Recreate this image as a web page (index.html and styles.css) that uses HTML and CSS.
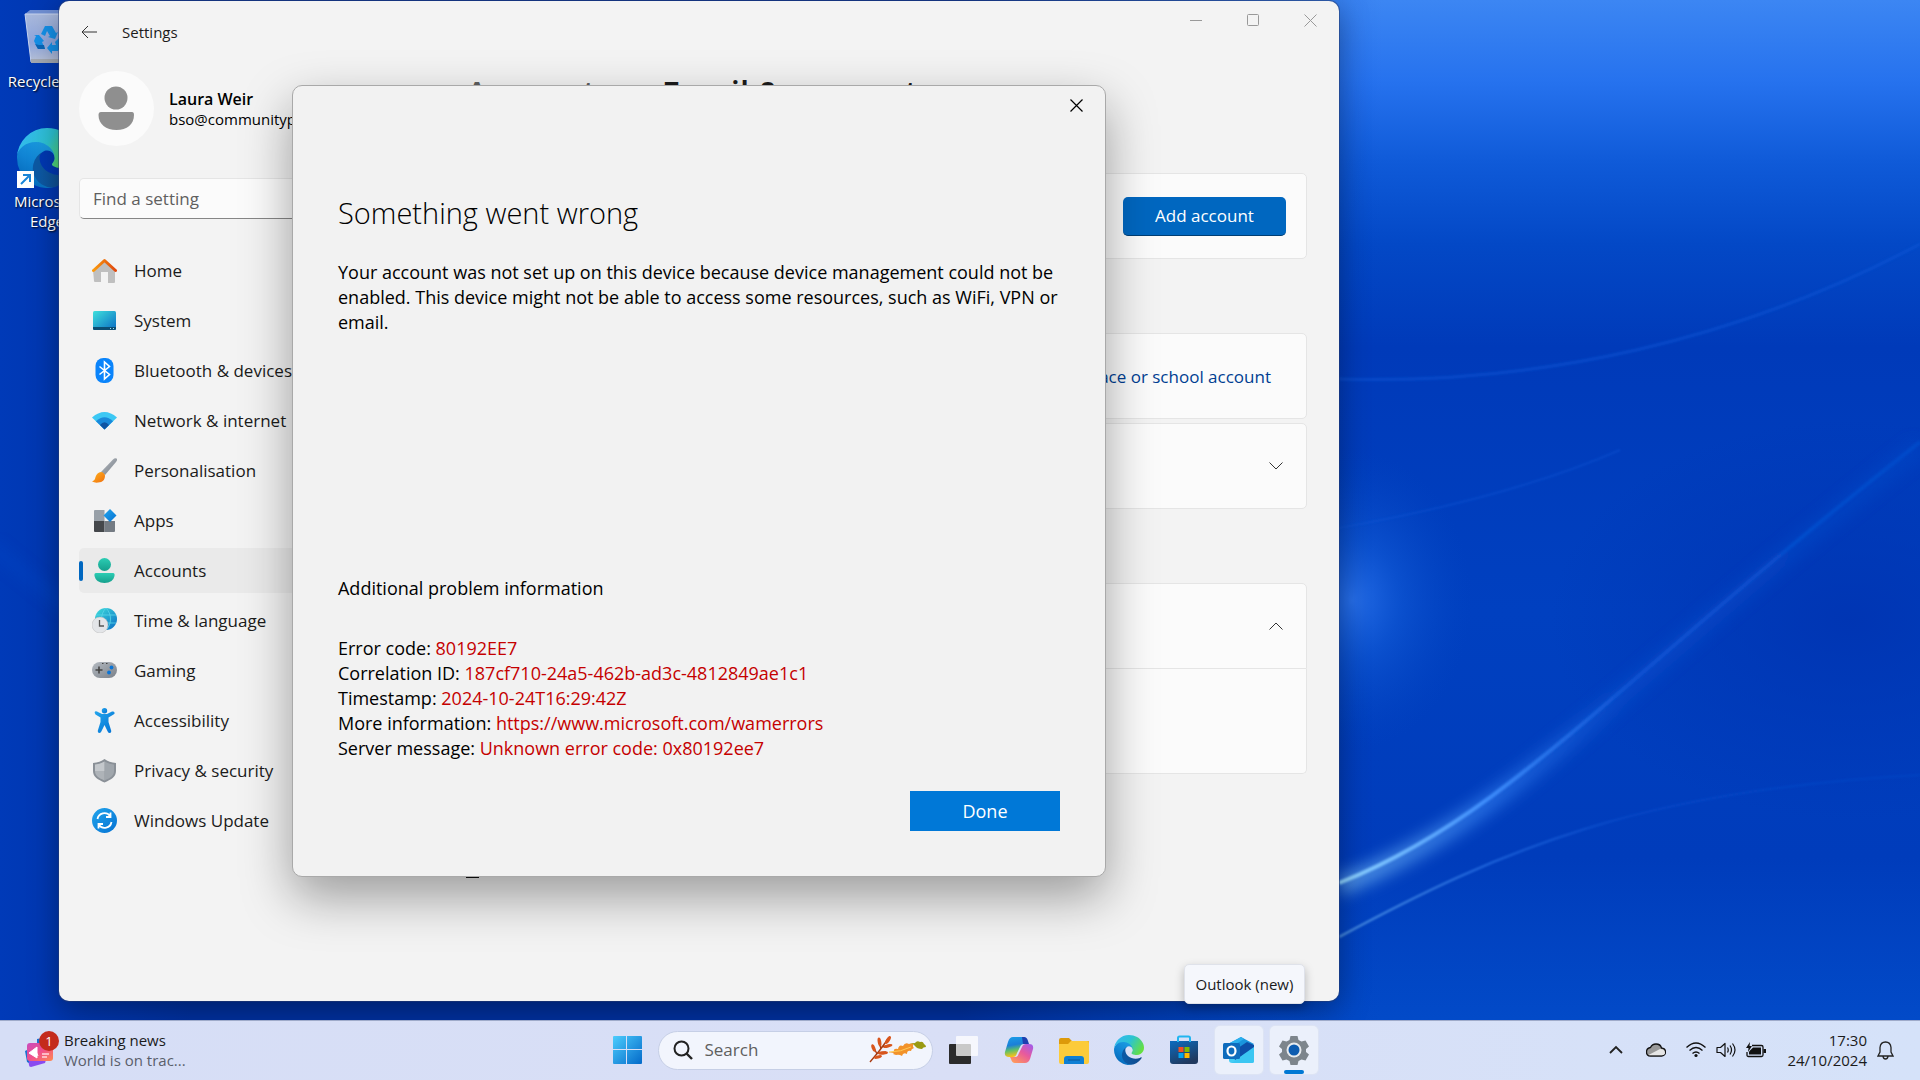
FILE: index.html
```html
<!DOCTYPE html>
<html lang="en-GB">
<head>
  <meta charset="UTF-8" />
  <title>Settings</title>
  <link rel="stylesheet" href="styles.css">
</head>
<body>
  <!-- shared gradients and the Edge logo -->
  <svg class="defs" width="0" height="0" aria-hidden="true">
    <defs>
      <linearGradient id="edgeDark" x1="0.2" y1="0.5" x2="1" y2="0.5"><stop offset="0" stop-color="#0c59a4"/><stop offset="1" stop-color="#114a8b"/></linearGradient>
      <linearGradient id="edgeBlue" x1="0.8" y1="0.1" x2="0.3" y2="1"><stop offset="0" stop-color="#1b9de2"/><stop offset="0.5" stop-color="#1184d4"/><stop offset="1" stop-color="#0367b8"/></linearGradient>
      <linearGradient id="edgeGreen" x1="0" y1="0.2" x2="1" y2="0.6"><stop offset="0" stop-color="#35b8f1"/><stop offset="0.5" stop-color="#2cc3d2"/><stop offset="1" stop-color="#66e03f"/></linearGradient>
      <linearGradient id="sky" x1="0" y1="0" x2="1" y2="1"><stop offset="0" stop-color="#3fe0dc"/><stop offset="1" stop-color="#0a6cc4"/></linearGradient>
      <linearGradient id="grey" x1="0" y1="0" x2="1" y2="1"><stop offset="0" stop-color="#b4bac1"/><stop offset="1" stop-color="#7a8088"/></linearGradient>
      <linearGradient id="teal" x1="0" y1="0" x2="0" y2="1"><stop offset="0" stop-color="#2ccdb4"/><stop offset="1" stop-color="#159f8c"/></linearGradient>
      <linearGradient id="blue" x1="0" y1="0" x2="1" y2="1"><stop offset="0" stop-color="#22a5ec"/><stop offset="1" stop-color="#0572d3"/></linearGradient>
      <linearGradient id="orange" x1="0" y1="0" x2="1" y2="0"><stop offset="0" stop-color="#fb9a0c"/><stop offset="1" stop-color="#e0480d"/></linearGradient>
      <linearGradient id="flame" x1="0" y1="0" x2="1" y2="1"><stop offset="0" stop-color="#ffb21c"/><stop offset="1" stop-color="#f07010"/></linearGradient>
    </defs>
    <symbol id="edge" viewBox="0 0 256 256">
      <g transform="translate(-4.63 -4.92)">
        <path fill="url(#edgeDark)" d="M235.68 195.46a93.73 93.73 0 0 1-10.54 4.71 101.87 101.87 0 0 1-35.9 6.46c-47.32 0-88.54-32.55-88.54-74.32A31.48 31.48 0 0 1 117.13 105c-42.8 1.8-53.8 46.4-53.8 72.53 0 73.88 68.09 81.37 82.76 81.37 7.91 0 19.84-2.3 27-4.56l1.31-.44a128.34 128.34 0 0 0 66.6-52.8 4 4 0 0 0-5.32-5.64z"/>
        <path fill="url(#edgeBlue)" d="M110.34 246.34A79.2 79.2 0 0 1 87.6 225a80.72 80.72 0 0 1 29.53-120c3.12-1.47 8.45-4.13 15.54-4a32.35 32.35 0 0 1 25.69 13 31.88 31.88 0 0 1 6.36 18.66c0-.21 24.46-79.6-80-79.6-43.9 0-80 41.66-80 78.21a130.15 130.15 0 0 0 12.11 56 128 128 0 0 0 156.38 67.11 75.55 75.55 0 0 1-62.78-8z"/>
        <path fill="url(#edgeGreen)" d="M156.94 153.78c-.81 1.05-3.3 2.5-3.3 5.66 0 2.61 1.7 5.12 4.72 7.23 14.38 10 41.49 8.68 41.56 8.68a59.56 59.56 0 0 0 30.27-8.35 61.38 61.38 0 0 0 30.43-52.88c.26-22.41-8-37.31-11.34-43.91-21.19-41.44-66.93-65.29-116.67-65.29a128 128 0 0 0-128 126.2c.48-36.54 36.8-66.05 80-66.05 3.5 0 23.46.34 42 10.07 16.34 8.58 24.9 18.94 30.85 29.21 6.18 10.67 7.28 24.15 7.28 29.52s-2.74 13.33-7.8 19.91z"/>
      </g>
    </symbol>
  </svg>

  <main class="desktop">
    <svg class="wallpaper" viewBox="0 0 1920 1020" preserveAspectRatio="none" aria-hidden="true">
      <defs>
        <linearGradient id="wpBase" x1="0" y1="0" x2="0" y2="1">
          <stop offset="0" stop-color="#3c86f3"/><stop offset="0.08" stop-color="#2672ee"/><stop offset="0.16" stop-color="#0f5ad8"/>
          <stop offset="0.24" stop-color="#0348c6"/><stop offset="0.34" stop-color="#003ab9"/><stop offset="0.6" stop-color="#0040c0"/>
          <stop offset="0.84" stop-color="#003cbb"/><stop offset="1" stop-color="#024ac8"/>
        </linearGradient>
        <linearGradient id="wpLeft" x1="0" y1="0" x2="1" y2="0">
          <stop offset="0" stop-color="#003ab8"/><stop offset="0.1" stop-color="#00309e"/><stop offset="0.5" stop-color="#00309e"/><stop offset="0.72" stop-color="#003ab9" stop-opacity="0"/>
        </linearGradient>
        <radialGradient id="wpGlow"><stop offset="0" stop-color="#2a72ec" stop-opacity="0.9"/><stop offset="0.4" stop-color="#1560dc" stop-opacity="0.5"/><stop offset="1" stop-color="#0448c4" stop-opacity="0"/></radialGradient>
        <radialGradient id="wpDark"><stop offset="0" stop-color="#0034b2" stop-opacity="0.9"/><stop offset="1" stop-color="#0034b2" stop-opacity="0"/></radialGradient>
        <linearGradient id="wpStreak" gradientUnits="userSpaceOnUse" x1="1339" y1="0" x2="1920" y2="0">
          <stop offset="0" stop-color="#8fd4ff"/><stop offset="0.25" stop-color="#3f8dfb"/><stop offset="0.5" stop-color="#1560e0" stop-opacity="0.5"/><stop offset="1" stop-color="#0a58d8" stop-opacity="0.4"/>
        </linearGradient>
        <filter id="soft" x="-20%" y="-20%" width="140%" height="140%"><feGaussianBlur stdDeviation="8"/></filter>
        <filter id="fine" x="-20%" y="-20%" width="140%" height="140%"><feGaussianBlur stdDeviation="1"/></filter>
      </defs>
      <rect width="1920" height="1020" fill="url(#wpBase)"/>
      <rect width="1920" height="1020" fill="url(#wpLeft)"/>
      <ellipse cx="1850" cy="620" rx="300" ry="200" fill="url(#wpDark)"/>
      <ellipse cx="1352" cy="600" rx="120" ry="150" fill="url(#wpGlow)"/>
      <g fill="none">
        <path d="M1339 886C1510 820 1610 690 1920 446" stroke="url(#wpStreak)" stroke-width="18" opacity="0.6" filter="url(#soft)"/>
        <path d="M1339 883C1510 815 1610 685 1920 442" stroke="url(#wpStreak)" stroke-width="4" filter="url(#fine)"/>
        <path d="M1339 937C1500 850 1640 790 1920 775" stroke="url(#wpStreak)" stroke-width="2" opacity="0.6" filter="url(#fine)"/>
        <path d="M1339 379C1540 385 1740 340 1920 244" stroke="#1058d8" stroke-width="3" opacity="0.5" filter="url(#fine)"/>
        <path d="M1339 528C1440 510 1540 485 1620 450" stroke="#1058d8" stroke-width="2" opacity="0.4" filter="url(#fine)"/>
        <path d="M-10 545L70 610" stroke="#0a50d0" stroke-width="6" opacity="0.5" filter="url(#soft)"/>
      </g>
    </svg>

    <div class="shortcuts">
      <a class="shortcut" href="#recycle">
        <svg width="60" height="60" viewBox="0 0 60 60">
          <defs><linearGradient id="bin" x1="0" y1="0" x2="0" y2="1"><stop offset="0" stop-color="#a9b9dc"/><stop offset="0.6" stop-color="#8fa6dd"/><stop offset="1" stop-color="#b9c3d8"/></linearGradient></defs>
          <path d="M8 6l5-4h34l5 4z" fill="#6f8ed2"/>
          <path d="M8 6h44l-5 48H14z" fill="url(#bin)" stroke="#c7d3ee"/>
          <path d="M14 51h33v4H14z" fill="#a4a9b2"/>
          <g fill="#1490e8"><path d="M24 26l4-8h7l4 7 2-1-3 7-7-2 2-1-3-5-2 5z"/><path d="M22 27l5 6-2 1 3 7h-7l-4-8 2-5-2-1z"/><path d="M42 30l3 7-4 6h-6v3l-5-6 5-6v3h4l-1-3z"/></g>
          <path d="M18 36l3 5h7l-1-4h-5z" fill="#0a66b8"/>
        </svg>
        <span>Recycle Bin</span>
      </a>
      <a class="shortcut" href="#edge-browser">
        <svg width="60" height="60" viewBox="0 0 60 60">
          <use href="#edge" width="60" height="60"/>
          <path d="M0 43h17v17H0z" fill="#fff"/>
          <path d="M4 56l9-9M6 47h7v7" fill="none" stroke="#1a86d8" stroke-width="2"/>
        </svg>
        <span>Microsoft Edge</span>
      </a>
    </div>

    <section class="window" aria-label="Settings">
      <header class="titlebar">
        <button class="back" aria-label="Back"><svg width="18" height="16" viewBox="0 0 18 16"><path d="M9 2L3 8l6 6M3 8h15" fill="none" stroke="#333"/></svg></button>
        <span class="app-name">Settings</span>
        <div class="caption">
          <button aria-label="Minimise"><svg width="13" height="13" viewBox="0 0 13 13"><path d="M0 6.500h12" stroke="#999"/></svg></button>
          <button aria-label="Maximise"><svg width="13" height="13" viewBox="0 0 13 13"><rect x="0.500" y="0.500" width="11" height="11" rx="1" fill="none" stroke="#999"/></svg></button>
          <button aria-label="Close"><svg width="13" height="13" viewBox="0 0 13 13"><path d="M0.500 0.500l12 12M12.500 0.500l-12 12" stroke="#999"/></svg></button>
        </div>
      </header>

      <div class="body">
        <aside class="sidebar">
          <div class="profile">
            <svg class="avatar" width="75" height="75" viewBox="0 0 75 75"><circle cx="37" cy="27" r="11.500" fill="#8f8f8f"/><path d="M22 41h31q2 0 2 3c0 9-7 15-17.500 15S19.500 53 19.500 44q0-3 2.500-3z" fill="#8f8f8f"/></svg>
            <div>
              <div class="user-name">Laura Weir</div>
              <div class="user-mail">bso@communityp</div>
            </div>
          </div>
          <input class="find" type="text" placeholder="Find a setting" aria-label="Find a setting">
          <nav class="nav">
            <a href="#home"><svg viewBox="0 0 25 25"><path d="M1 12L12.500 2 24 12v0h-1v12q0 1-1 1h-6V14H9v10H3q-1 0-1-1z" fill="#bfbfbf"/><path d="M1.500 12.500L12.500 2.500l11 10" fill="none" stroke="url(#orange)" stroke-width="3" stroke-linecap="round" stroke-linejoin="round"/></svg>Home</a>
            <a href="#system"><svg viewBox="0 0 25 25"><rect x="1" y="3" width="23" height="19" rx="1.500" fill="url(#sky)"/><path d="M1 19h23v1.500q0 1.500-1.500 1.500h-20Q1 22 1 20.500z" fill="#0b4e74"/><path d="M18 20.500h1M21 20.500h1" stroke="#9fe0f0"/></svg>System</a>
            <a href="#bluetooth"><svg viewBox="0 0 25 25"><rect x="3.500" width="18" height="25" rx="8" fill="#0a84fb"/><path d="M7.500 8.500l10 8-5 4.500V4l5 4.500-10 8" fill="none" stroke="#fff" stroke-width="1.600"/></svg>Bluetooth &amp; devices</a>
            <a href="#network"><svg viewBox="0 0 25 25"><path d="M0 9.500Q12.500-1.500 25 9.500L12.500 21.500z" fill="#3cc8f4"/><path d="M4 13.300Q12.500 5 21 13.300l-8.500 8.200z" fill="#1989da"/><path d="M8 17Q12.500 11.500 17 17l-4.500 4.500z" fill="#0f55a3"/></svg>Network &amp; internet</a>
            <a href="#personal"><svg viewBox="0 0 25 25"><path d="M9 14L21 1.500Q23-.5 24.500.5T24 4L13 17z" fill="url(#grey)"/><path d="M9 14q3 0 4 3.500c0 4-2 7-7 7q-3 .5-6-1 3-1 3.500-4.500Q5 14.500 9 14z" fill="url(#flame)"/></svg>Personalisation</a>
            <a href="#apps"><svg viewBox="0 0 25 25"><path d="M3 2h9.500v11H2V3q0-1 1-1z" fill="#98a0a8"/><path d="M2 13h10.500v11H3q-1 0-1-1z" fill="#44474b"/><path d="M12.500 13H23v10q0 1-1 1h-9.500z" fill="#747b83"/><path d="M18 1l6.500 6.500L18 14l-6.500-6.500z" fill="url(#blue)"/></svg>Apps</a>
            <a class="active" href="#accounts"><svg viewBox="0 0 25 25"><circle cx="12.500" cy="6.500" r="6.500" fill="url(#teal)"/><path d="M4 15h17q2 0 1.500 3-1.500 7-10 7t-10-7Q2 15 4 15z" fill="url(#teal)"/></svg>Accounts</a>
            <a href="#time"><svg viewBox="0 0 25 25"><circle cx="14" cy="11" r="11" fill="url(#sky)"/><path d="M14 0c-6 6-6 16 0 22M14 0c6 6 6 16 0 22M4 7h20M4 15h20" fill="none" stroke="#5cd5ea" stroke-width="0.800"/><circle cx="8" cy="17" r="8" fill="#e3e5e8" stroke="#bbb" stroke-width="0.500"/><path d="M7.500 12v6H12" fill="none" stroke="#555" stroke-width="1.300"/></svg>Time &amp; language</a>
            <a href="#gaming"><svg viewBox="0 0 25 25"><rect y="4" width="25" height="16" rx="8" fill="url(#grey)"/><path d="M3.500 12h7M7 8.500v7" stroke="#444" stroke-width="1.600"/><circle cx="19.500" cy="9.500" r="1.900" fill="#0a74d6"/><circle cx="17" cy="14.500" r="1.900" fill="#0a74d6"/><path d="M10 5.500h1.500M14 5.500h1.500" stroke="#444"/></svg>Gaming</a>
            <a href="#accessibility"><svg viewBox="0 0 25 25"><circle cx="12.500" cy="2.700" r="2.700" fill="url(#blue)"/><path d="M3 3.500q1-.5 2 0l5 2.500h5l5-2.500q2-.5 2.500 1t-1 2L16.500 9.500V14l2.800 9q0 2-1.500 2t-2-1.200L12.500 17l-3.300 6.800Q8.500 25 7.200 25t-1.500-2l2.800-9V9.500L3.500 6.500Q2 4.500 3 3.500z" fill="url(#blue)"/></svg>Accessibility</a>
            <a href="#privacy"><svg viewBox="0 0 25 25"><path d="M12.500 1Q17 4.500 24 5v8c0 6-5 8.500-11.500 11.500C6 21.500 1 19 1 13V5q7-.5 11.500-4z" fill="#8a9097"/><path d="M12.500 3.500Q17 6 22 6.500V13c0 5-4 7-9.500 9.500z" fill="#a0a6ac"/><path d="M12.500 3.500Q8 6 3 6.500V13h9.500z" fill="#c4c8cc"/><path d="M3 13c0 5 4 7 9.500 9.500V13z" fill="#aeb3b8"/></svg>Privacy &amp; security</a>
            <a href="#update"><svg viewBox="0 0 25 25"><circle cx="12.500" cy="12.500" r="12.500" fill="url(#blue)"/><path d="M5.500 11a7 7 0 0 1 12.500-3M19.500 14A7 7 0 0 1 7 17M18.500 4.500V9H14M6.500 20.500V16H11" fill="none" stroke="#fff" stroke-width="1.800"/></svg>Windows Update</a>
          </nav>
        </aside>

        <div class="content">
          <h1><span class="crumb">Accounts</span><span class="crumb sep">›</span>Email &amp; accounts</h1>
          <div class="card"><button class="add">Add account</button></div>
          <div class="card section"><a href="#work">Add a workplace or school account</a></div>
          <div class="card">
            <button class="chevron" aria-label="Expand"><svg width="14" height="8" viewBox="0 0 14 8"><path d="M0.500 0.500L7 7l6.500-6.500" fill="none" stroke="#333"/></svg></button>
          </div>
          <div class="card section last">
            <button class="chevron" aria-label="Collapse"><svg width="14" height="8" viewBox="0 0 14 8"><path d="M0.500 7.500L7 1l6.500 6.500" fill="none" stroke="#333"/></svg></button>
          </div>
          <div class="card-extra"></div>
          <svg class="help" width="13" height="16" viewBox="0 0 13 16" aria-hidden="true"><path d="M1 1h11v14H1z" fill="none" stroke="#111" stroke-width="2"/></svg>
        </div>
      </div>

      <div class="overlay">
        <div class="dialog" role="dialog" aria-labelledby="dialogTitle">
          <button class="dialog-close" aria-label="Close"><svg width="13" height="13" viewBox="0 0 13 13"><path d="M0.500 0.500l12 12M12.500 0.500l-12 12" stroke="#000" stroke-width="1.200"/></svg></button>
          <h2 id="dialogTitle">Something went wrong</h2>
          <p class="message">Your account was not set up on this device because device management could not be enabled. This device might not be able to access some resources, such as WiFi, VPN or email.</p>
          <p>Additional problem information</p>
          <ul class="details">
            <li>Error code: <span>80192EE7</span></li>
            <li>Correlation ID: <span>187cf710-24a5-462b-ad3c-4812849ae1c1</span></li>
            <li>Timestamp: <span>2024-10-24T16:29:42Z</span></li>
            <li>More information: <span>https://www.microsoft.com/wamerrors</span></li>
            <li>Server message: <span>Unknown error code: 0x80192ee7</span></li>
          </ul>
          <button class="done">Done</button>
        </div>
      </div>
    </section>
  </main>

  <footer class="taskbar">
    <button class="news">
      <svg width="34" height="38" viewBox="0 0 34 38">
        <defs><linearGradient id="newsCard" x1="0" y1="0" x2="1" y2="1"><stop offset="0" stop-color="#c94bbd"/><stop offset="0.5" stop-color="#f0508c"/><stop offset="1" stop-color="#ff8a50"/></linearGradient></defs>
        <path d="M3 28l18 1-1 3-14 4q-2 0-2-2z" fill="#8a4bf0"/>
        <path d="M0 20l4-2v14l-2-1zM12 8l10-2v8H12z" fill="#1a6fd0"/>
        <rect x="2" y="12" width="26" height="18" rx="3" fill="url(#newsCard)"/>
        <path d="M4 22l8-6v11zM10 18l3 7" fill="#fff" stroke="#fff"/>
        <path d="M17 23h7M17 26h5" stroke="#ffd9e0" stroke-width="1.500"/>
        <circle cx="24" cy="10" r="10" fill="#c42b1c"/>
        <text class="badge" x="24" y="15" text-anchor="middle">1</text>
      </svg>
      <span class="news-text">Breaking news<small>World is on trac...</small></span>
    </button>

    <div class="apps">
      <button class="app" aria-label="Start"><svg width="30" height="30" viewBox="0 0 30 30"><defs><linearGradient id="start" gradientUnits="userSpaceOnUse" x1="0" y1="0" x2="30" y2="30"><stop offset="0" stop-color="#4fd0ff"/><stop offset="1" stop-color="#0268c8"/></linearGradient></defs><path d="M2 1h12v13H1V2q0-1 1-1zM15 1h14q1 0 1 1v12H15zM1 15h13v14H2q-1 0-1-1zM15 15h15v13q0 1-1 1H15z" fill="url(#start)"/></svg></button>
      <label class="search">
        <svg width="20" height="20" viewBox="0 0 20 20"><circle cx="8.500" cy="8.500" r="7" fill="none" stroke="#222" stroke-width="2"/><path d="M13.500 13.500L19 19" stroke="#222" stroke-width="2.400"/></svg>
        <input type="text" placeholder="Search" aria-label="Search">
        <svg width="58" height="28" viewBox="0 0 58 28">
          <path d="M1 26Q10 16 19 3M8 18L4 10M12 13L10 4M9 17l8-1M13 11l8-2" fill="none" stroke="#a83a10" stroke-width="1.400"/>
          <g fill="#d8551c"><ellipse cx="4.500" cy="12" rx="1.800" ry="4" transform="rotate(-20 4.500 12)"/><ellipse cx="10.500" cy="6" rx="1.800" ry="4.500" transform="rotate(-10 10.500 6)"/><ellipse cx="19" cy="4" rx="1.900" ry="4.500" transform="rotate(32 19 4)"/><ellipse cx="19" cy="10" rx="1.600" ry="4.500" transform="rotate(75 19 10)"/><ellipse cx="14" cy="17" rx="1.700" ry="5" transform="rotate(85 14 17)"/><ellipse cx="9" cy="21" rx="1.500" ry="4" transform="rotate(75 9 21)"/></g>
          <path d="M19 16h6q-1-4 4-3 1-5 5-3 2-4 6-2l5-1q-2 4 0 5-3 1-3 3-4-1-4 3-4-2-5 2-3-2-6-1l-3-1 1-1z" fill="#f2922a"/>
          <path d="M20 16q12 0 22-5" fill="none" stroke="#ffcb55"/>
          <path d="M40 8l6-1q2-3 5-1 3-1 4 2 2 1 2 3-3 0-4 2-5 0-7-3l-2-2z" fill="#9a9a12"/>
        </svg>
      </label>
      <button class="app" aria-label="Task view"><svg width="30" height="30" viewBox="0 0 30 30"><rect y="9" width="22" height="20" rx="1" fill="#2b2b2b"/><rect x="7" y="1" width="22" height="20" rx="1" fill="#fff" opacity="0.750"/></svg></button>
      <button class="app" aria-label="Copilot"><svg width="30" height="30" viewBox="0 0 30 30">
        <defs>
          <linearGradient id="copA" x1="0" y1="0" x2="0.200" y2="1"><stop offset="0" stop-color="#1a9fe8"/><stop offset="0.450" stop-color="#1b7fd8"/><stop offset="0.700" stop-color="#5fc06a"/><stop offset="1" stop-color="#f7c21a"/></linearGradient>
          <linearGradient id="copB" x1="1" y1="0" x2="0.200" y2="1"><stop offset="0" stop-color="#9a5cf2"/><stop offset="0.500" stop-color="#e85a9c"/><stop offset="1" stop-color="#ff9a5c"/></linearGradient>
        </defs>
        <path d="M9 2h10q3 0 4 4l1 3h-4q-3 0-4 3l-3 6q-1 4-4 4H5q-5 0-4-5l3-10q1.500-5 5-5z" fill="url(#copA)"/>
        <path d="M18 2h2q3 0 4 4l1 3h-6z" fill="#1d3fb0"/>
        <path d="M21 28H11q-3 0-4-4l-1-2h5q3 0 4-4l3-6q1-3 4-3h3q5 0 4 5l-3 10q-1.500 4-5 4z" fill="url(#copB)"/>
      </svg></button>
      <button class="app" aria-label="File Explorer"><svg width="32" height="30" viewBox="0 0 32 30"><path d="M1 5q0-2 2-2h8l3 3h16q1 0 1 1v5H1z" fill="#dd9a0a"/><path d="M1 9h9l3-3h16q2 0 2 2v19q0 2-2 2H3q-2 0-2-2z" fill="#fccb3a"/><path d="M6 29v-5q0-3 3-3h14q3 0 3 3v5z" fill="#0e7fd4"/><path d="M10 25h12" stroke="#0a5796"/></svg></button>
      <button class="app" aria-label="Microsoft Edge"><svg width="30" height="30"><use href="#edge" width="30" height="30"/></svg></button>
      <button class="app" aria-label="Microsoft Store"><svg width="30" height="30" viewBox="0 0 30 30"><defs><linearGradient id="store" x1="0" y1="0" x2="0.500" y2="1"><stop offset="0" stop-color="#0b6cc0"/><stop offset="1" stop-color="#20395f"/></linearGradient></defs><path d="M1 6h28v20q0 3-3 3H4q-3 0-3-3z" fill="url(#store)"/><path d="M9 7V3q0-1.500 1.500-1.500h9Q21 1.500 21 3v4" fill="none" stroke="#22b5f0" stroke-width="2"/><path d="M9.500 12h5v5h-5z" fill="#f25022"/><path d="M15.500 12h5v5h-5z" fill="#7fba00"/><path d="M9.500 18h5v5h-5z" fill="#00a4ef"/><path d="M15.500 18h5v5h-5z" fill="#ffb900"/></svg></button>
      <button class="app lit" aria-label="Outlook (new)">
        <svg width="32" height="30" viewBox="0 0 32 30"><path d="M5 9L18 2l13 7-8 8H6z" fill="#1a95dd"/><path d="M5 9L18 2l3 2-14 9z" fill="#2bb0ee"/><path d="M6 13h25v13q0 2-2 2H9q-3 0-3-3z" fill="#44cdf5"/><path d="M31 10v4L12 25l-3-8 15-10z" fill="#0d4fa8"/><path d="M31 12v14q0 2-2 2H9l12-9z" fill="#3bc6f2"/><rect y="8" width="17" height="16" rx="1.500" fill="#0f6cbd"/><ellipse cx="8.500" cy="16" rx="4" ry="4.500" fill="none" stroke="#fff" stroke-width="2.200"/></svg>
        <span class="tooltip" role="tooltip">Outlook (new)</span>
      </button>
      <button class="app lit open" aria-label="Settings"><svg width="32" height="30" viewBox="0 0 32 30"><path d="M12.500 1h7l1 4 3 1.600 4-1.200 3.500 6-3 2.600v3l3 2.600-3.500 6-4-1.200-3 1.600-1 4h-7l-1-4-3-1.600-4 1.200-3.500-6L4 17v-3l-3-2.600 3.500-6 4 1.200 3-1.600z" fill="#7d858c"/><circle cx="16" cy="15" r="7.500" fill="#e8ebee"/><circle cx="16" cy="15" r="5.500" fill="#0d5cb0"/></svg></button>
    </div>

    <div class="tray">
      <button aria-label="Show hidden icons"><svg width="14" height="10" viewBox="0 0 14 10"><path d="M1 8l6-6 6 6" fill="none" stroke="#222" stroke-width="1.800"/></svg></button>
      <button class="cloud" aria-label="OneDrive"><svg width="20" height="14" viewBox="0 0 20 14"><path d="M4.500 13q-4 0-4-4Q.5 5 4.500 4.500 6 1 10 1q4.500 0 5.500 4 4 .5 4 4t-4 4z" fill="#999" stroke="#111" stroke-width="1.300"/><path d="M2.500 12L14 6q5 0 5 4 0 2-3 2.300H4z" fill="#e6e6e6"/></svg></button>
      <button aria-label="Network"><svg width="20" height="16" viewBox="0 0 20 16"><path d="M.5 5.500q9.500-9 19 0M3.500 8.500q6.500-6 13 0M6.500 11.500q3.500-3 7 0" fill="none" stroke="#111" stroke-width="1.300"/><circle cx="10" cy="13.500" r="1.600" fill="#111"/></svg></button>
      <button aria-label="Volume"><svg width="20" height="16" viewBox="0 0 20 16"><path d="M1 5.500h3.500L9 1.500v13l-4.500-4H1z" fill="none" stroke="#111" stroke-width="1.200" stroke-linejoin="round"/><path d="M11.500 5.500q1.500 2.500 0 5M14 3.500q3 4.500 0 9M16.500 1.500q5 6.500 0 13" fill="none" stroke="#111" stroke-width="1.200"/></svg></button>
      <button aria-label="Battery"><svg width="20" height="16" viewBox="0 0 20 16"><path d="M6 3.500h9.500q1.500 0 1.500 1.500v8q0 1.500-1.500 1.500h-13Q1 14.500 1 13v-3" fill="none" stroke="#111" stroke-width="1.300"/><path d="M7 5.500h8v7H3v-3z" fill="#111"/><path d="M17.500 7H20v4h-2.500zM4 0L0 6h2.500L2 10l4-6H3.500z" fill="#111"/></svg></button>
      <button class="clock"><span>17:30</span><span>24/10/2024</span></button>
      <button aria-label="Notifications"><svg width="17" height="19" viewBox="0 0 17 19"><path d="M8.500 1q-5 0-5.500 5.500V11L1 15h15l-2-4V6.500Q13.500 1 8.500 1zM6 15.500q.5 2.500 2.500 2.500t2.500-2.500" fill="none" stroke="#222" stroke-width="1.300"/></svg></button>
    </div>
  </footer>
</body>
</html>
```
FILE: styles.css
```css
* {
  box-sizing: border-box;
  margin: 0;
  padding: 0;
}

body {
  display: flex;
  flex-direction: column;
  height: 100vh;
  overflow: hidden;
  font-family: "Segoe UI", "Open Sans", sans-serif;
  font-size: 17px;
  line-height: 25px;
  color: #1b1b1b;
  background: #003ab9;
}

button,
input {
  font: inherit;
  color: inherit;
  border: none;
  background: none;
  outline: none;
}

button {
  display: flex;
  align-items: center;
  justify-content: center;
}

a {
  color: inherit;
  text-decoration: none;
}

svg {
  display: block;
  flex-shrink: 0;
}

.defs {
  position: absolute;
}

/* Desktop */
.desktop {
  position: relative;
  flex: 1;
  min-height: 0;
}

.wallpaper {
  position: absolute;
  inset: 0;
  width: 100%;
  height: 100%;
}

.shortcuts {
  position: absolute;
  top: 8px;
  left: 0;
  width: 94px;
  display: flex;
  flex-direction: column;
  gap: 37px;
}

.shortcut {
  display: flex;
  flex-direction: column;
  align-items: center;
  gap: 3px;
  color: #fff;
  font-size: 15px;
  line-height: 20px;
  text-align: center;
  text-shadow: 1px 1px 2px #000;
}

/* Settings window */
.window {
  position: absolute;
  top: 1px;
  bottom: 19px;
  left: 59px;
  width: calc(100% * 2 / 3);
  display: flex;
  flex-direction: column;
  overflow: hidden;
  border-radius: 10px;
  background: #f3f3f3;
  box-shadow: 0 0 0 1px rgba(40, 60, 110, 0.5), 0 8px 30px rgba(0, 0, 0, 0.35);
}

.titlebar {
  display: flex;
  align-items: center;
  height: 62px;
  padding-left: 20px;
}

.back {
  width: 18px;
  height: 30px;
}

.app-name {
  margin-left: 25px;
  font-size: 15px;
}

.caption {
  display: flex;
  align-self: flex-start;
  margin-left: auto;
}

.caption button {
  width: 57px;
  height: 39px;
}

.body {
  flex: 1;
  display: flex;
  gap: 37px;
  padding: 8px 32px 0 20px;
}

.sidebar {
  width: 350px;
}

.profile {
  display: flex;
  align-items: center;
  gap: 15px;
  line-height: 20px;
  color: #000;
}

.avatar {
  border-radius: 50%;
  background: #fbfbfb;
}

.user-name {
  font-size: 16px;
  font-weight: 600;
}

.user-mail {
  font-size: 15px;
}

.find {
  width: 100%;
  height: 41px;
  margin: 32px 0 29px;
  padding: 0 13px;
  border: 1px solid #e5e5e5;
  border-bottom-color: #868686;
  border-radius: 5px;
  background: #fbfbfb;
}

input::placeholder {
  color: #5f5f5f;
  opacity: 1;
}

.nav {
  display: flex;
  flex-direction: column;
  gap: 5px;
}

.nav a {
  position: relative;
  display: flex;
  align-items: center;
  gap: 17px;
  height: 45px;
  padding-left: 13px;
  border-radius: 5px;
}

.nav svg {
  width: 25px;
  height: 25px;
}

.nav .active {
  background: #eaeaea;
}

.nav .active::before {
  content: "";
  position: absolute;
  left: 0;
  width: 4px;
  height: 20px;
  border-radius: 2px;
  background: #0067c0;
}

.content {
  flex: 1;
}

h1 {
  display: flex;
  margin-bottom: 58px;
  font-size: 33px;
  line-height: 44px;
  font-weight: 600;
}

.crumb {
  color: #5f5f5f;
}

.sep {
  width: 50px;
  text-align: center;
}

.card {
  display: flex;
  align-items: center;
  justify-content: flex-end;
  height: 86px;
  padding: 0 20px;
  margin-bottom: 4px;
  border: 1px solid #e5e5e5;
  border-radius: 5px;
  background: #fbfbfb;
}

.card.section {
  margin-top: 74px;
}

.card a {
  margin-right: 15px;
  color: #003e92;
}

.card .chevron {
  width: 20px;
  height: 30px;
}

.add {
  width: 163px;
  height: 39px;
  border-bottom: 1px solid #003e73;
  border-radius: 5px;
  background: #0067c0;
  color: #fff;
}

.card.last {
  margin-bottom: 0;
  border-radius: 5px 5px 0 0;
}

.card-extra {
  height: 105px;
  border: 1px solid #e5e5e5;
  border-top: none;
  border-radius: 0 0 5px 5px;
  background: #fbfbfb;
}

.help {
  margin-top: 88px;
}

/* Error dialog */
.overlay {
  position: absolute;
  inset: 0;
  display: flex;
  align-items: flex-start;
  justify-content: center;
  padding-top: 84px;
}

.dialog {
  position: relative;
  display: flex;
  flex-direction: column;
  width: 814px;
  padding: 103px 45px 45px;
  border: 1px solid #a9a9a9;
  border-radius: 10px;
  background: #f2f2f2;
  color: #000;
  font-size: 18px;
  box-shadow: 0 20px 50px rgba(0, 0, 0, 0.36);
}

.dialog-close {
  position: absolute;
  top: 0;
  right: 0;
  width: 57px;
  height: 39px;
}

.dialog h2 {
  margin-bottom: 23px;
  font-size: 29px;
  line-height: 48px;
  font-weight: 300;
}

.dialog p {
  margin-bottom: 35px;
}

.dialog .message {
  min-height: 256px;
  margin-bottom: 60px;
}

.details {
  list-style: none;
}

.details span {
  color: #c50000;
}

.done {
  align-self: flex-end;
  width: 150px;
  height: 40px;
  margin-top: 30px;
  background: #0078d7;
  color: #fff;
}

/* Taskbar */
.taskbar {
  position: relative;
  display: grid;
  grid-template-columns: 1fr auto 1fr;
  align-items: center;
  height: 60px;
  padding-bottom: 1px;
  border-top: 1px solid #9fabca;
  background: linear-gradient(90deg, #d6def6, #d9dff6 50%, #d5e2f9);
  font-size: 15px;
  line-height: 20px;
}

.news {
  justify-self: start;
  gap: 5px;
  padding-left: 25px;
  text-align: left;
}

.news-text small {
  display: block;
  font-size: 15px;
  color: #5a5f6b;
}

.badge {
  fill: #fff;
  font-size: 13px;
}

.apps {
  display: flex;
  align-items: center;
  gap: 7px;
}

.app {
  position: relative;
  width: 48px;
  height: 48px;
  border-radius: 5px;
}

.app.lit {
  background: #ebf0fb;
  box-shadow: 0 0 0 1px #dde4f4;
}

.app.open::after {
  content: "";
  position: absolute;
  bottom: 0;
  width: 20px;
  height: 4px;
  border-radius: 2px;
  background: #0078d4;
}

.search {
  display: flex;
  align-items: center;
  gap: 12px;
  width: 275px;
  height: 39px;
  padding: 0 5px 0 14px;
  border: 1px solid #c6cfe6;
  border-radius: 20px;
  background: #f2f5fd;
}

.search input {
  flex: 1;
  min-width: 0;
  font-size: 17px;
}

.tooltip {
  position: absolute;
  bottom: 70px;
  left: -31px;
  padding: 9px 11px;
  border: 1px solid #dfe2ea;
  border-radius: 5px;
  background: #f5f7fc;
  box-shadow: 0 4px 10px rgba(0, 0, 0, 0.25);
  white-space: nowrap;
}

.tray {
  justify-self: end;
  display: flex;
  align-items: center;
  gap: 10px;
  padding-right: 26px;
}

.tray .cloud {
  margin: 0 10px 0 13px;
}

.clock {
  flex-direction: column;
  align-items: flex-end;
  margin-left: 11px;
}
```
